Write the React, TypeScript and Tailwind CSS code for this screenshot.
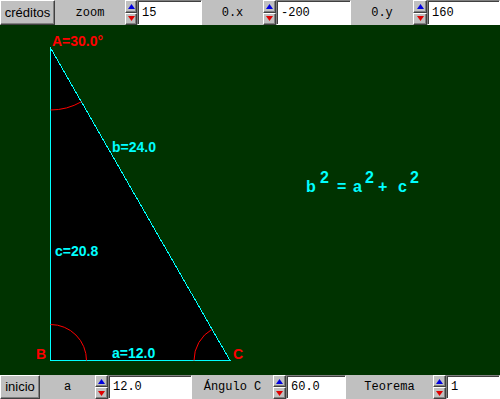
import React from 'react';

const bevelOut =
  'border border-t-white border-l-white border-r-[#404040] border-b-[#404040] shadow-[inset_-1px_-1px_#808080]';
const bevelIn =
  'border border-t-[#808080] border-l-[#808080] border-r-white border-b-white shadow-[inset_1px_1px_#404040]';

function Btn({ label, w }: { label: string; w: string }) {
  return (
    <div
      className={`${w} h-full flex items-center justify-center bg-[#c0c0c0] text-[13px] text-black ${bevelOut}`}
      style={{ fontFamily: '"Liberation Sans", Arial, sans-serif' }}
    >
      {label}
    </div>
  );
}

function Label({ text, w }: { text: string; w: string }) {
  return (
    <div
      className={`${w} h-full flex items-center justify-center text-[12px] text-black`}
      style={{ fontFamily: '"Liberation Mono", "Courier New", monospace' }}
    >
      {text}
    </div>
  );
}

function Spinner({ w }: { w: string }) {
  return (
    <div className={`${w} h-full flex flex-col`}>
      <div className={`flex-1 flex items-center justify-center bg-[#c0c0c0] ${bevelOut}`}>
        <svg width="7" height="5" viewBox="0 0 7 5">
          <polygon points="3.5,0 7,5 0,5" fill="#0000e0" />
        </svg>
      </div>
      <div className={`flex-1 flex items-center justify-center bg-[#c0c0c0] ${bevelOut}`}>
        <svg width="7" height="5" viewBox="0 0 7 5">
          <polygon points="0,0 7,0 3.5,5" fill="#e00000" />
        </svg>
      </div>
    </div>
  );
}

function Field({ value, w }: { value: string; w: string }) {
  return (
    <div
      className={`${w} h-full flex items-center pl-[4px] bg-white text-[12px] text-black ${bevelIn}`}
      style={{ fontFamily: '"Liberation Mono", "Courier New", monospace' }}
    >
      {value}
    </div>
  );
}

const bold = { fontFamily: '"Liberation Sans", Arial, sans-serif', fontWeight: 700 };

function Canvas() {
  return (
    <svg width="500" height="350" viewBox="0 25 500 350" className="block">
      <rect x="0" y="25" width="500" height="350" fill="#003300" />
      <polygon
        points="50.5,48 50.5,360.5 230,360.5"
        fill="#000000"
        stroke="#00ffff"
        strokeWidth="1"
        shapeRendering="crispEdges"
      />
      <g fill="none" stroke="#ff0000" strokeWidth="1">
        <path d="M 50.5 110 A 62 62 0 0 0 81.5 101.7" />
        <path d="M 50.5 324.5 A 36 36 0 0 1 86.5 360.5" />
        <path d="M 194 360.5 A 36 36 0 0 1 212 329.3" />
      </g>
      <g style={bold} fontSize="14">
        <text x="52" y="46" fill="#ff0000">A=30.0°</text>
        <text x="36" y="359" fill="#ff0000">B</text>
        <text x="233" y="359" fill="#ff0000">C</text>
        <text x="112" y="152" fill="#00ffff">b=24.0</text>
        <text x="55" y="256" fill="#00ffff">c=20.8</text>
        <text x="112" y="358" fill="#00ffff">a=12.0</text>
      </g>
      <g style={bold} fontSize="16" fill="#00ffff">
        <text x="306" y="192">b</text>
        <text x="320" y="183">2</text>
        <text x="337" y="192">=</text>
        <text x="353" y="192">a</text>
        <text x="365" y="183">2</text>
        <text x="378" y="192">+</text>
        <text x="398" y="192">c</text>
        <text x="410" y="183">2</text>
      </g>
    </svg>
  );
}

export default function App() {
  return (
    <div className="w-[500px] h-[399px] flex flex-col bg-[#c0c0c0] overflow-hidden">
      <div className="h-[25px] flex">
        <Btn label="créditos" w="w-[55px]" />
        <Label text="zoom" w="w-[70px]" />
        <Spinner w="w-[12px]" />
        <Field value="15" w="w-[65px]" />
        <Label text="0.x" w="w-[61px]" />
        <Spinner w="w-[13px]" />
        <Field value="-200" w="w-[75px]" />
        <Label text="0.y" w="w-[62px]" />
        <Spinner w="w-[14px]" />
        <Field value="160" w="w-[73px]" />
      </div>
      <Canvas />
      <div className="h-[24px] flex">
        <Btn label="inicio" w="w-[40px]" />
        <Label text="a" w="w-[55px]" />
        <Spinner w="w-[13px]" />
        <Field value="12.0" w="w-[84px]" />
        <Label text="Ángulo C" w="w-[81px]" />
        <Spinner w="w-[13px]" />
        <Field value="60.0" w="w-[60px]" />
        <Label text="Teorema" w="w-[87px]" />
        <Spinner w="w-[13px]" />
        <Field value="1" w="w-[54px]" />
      </div>
    </div>
  );
}
